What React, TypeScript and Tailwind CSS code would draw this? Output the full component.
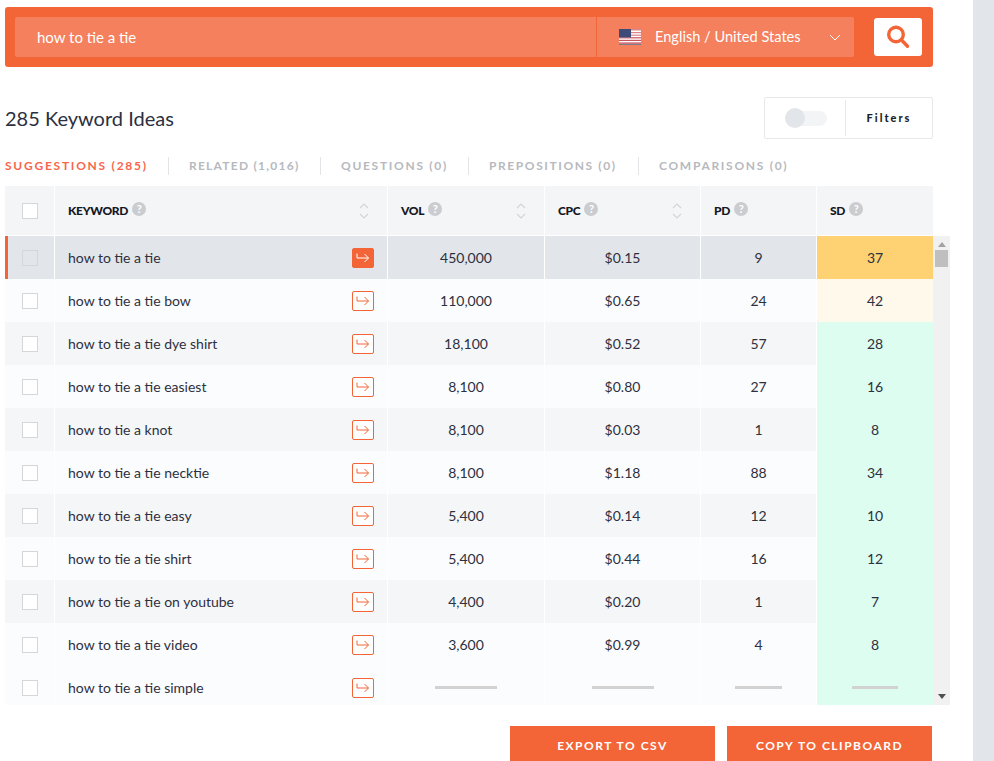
const font = { fontFamily: '"Lato", "Liberation Sans", sans-serif' };

type Row = { kw: string; vol?: string; cpc?: string; pd?: string; sd?: string; sdBg: string };

const rows: Row[] = [
  { kw: "how to tie a tie", vol: "450,000", cpc: "$0.15", pd: "9", sd: "37", sdBg: "bg-[#fed172]" },
  { kw: "how to tie a tie bow", vol: "110,000", cpc: "$0.65", pd: "24", sd: "42", sdBg: "bg-[#fff9eb]" },
  { kw: "how to tie a tie dye shirt", vol: "18,100", cpc: "$0.52", pd: "57", sd: "28", sdBg: "bg-[#dcfdf0]" },
  { kw: "how to tie a tie easiest", vol: "8,100", cpc: "$0.80", pd: "27", sd: "16", sdBg: "bg-[#dcfdf0]" },
  { kw: "how to tie a knot", vol: "8,100", cpc: "$0.03", pd: "1", sd: "8", sdBg: "bg-[#dcfdf0]" },
  { kw: "how to tie a tie necktie", vol: "8,100", cpc: "$1.18", pd: "88", sd: "34", sdBg: "bg-[#dcfdf0]" },
  { kw: "how to tie a tie easy", vol: "5,400", cpc: "$0.14", pd: "12", sd: "10", sdBg: "bg-[#dcfdf0]" },
  { kw: "how to tie a tie shirt", vol: "5,400", cpc: "$0.44", pd: "16", sd: "12", sdBg: "bg-[#dcfdf0]" },
  { kw: "how to tie a tie on youtube", vol: "4,400", cpc: "$0.20", pd: "1", sd: "7", sdBg: "bg-[#dcfdf0]" },
  { kw: "how to tie a tie video", vol: "3,600", cpc: "$0.99", pd: "4", sd: "8", sdBg: "bg-[#dcfdf0]" },
  { kw: "how to tie a tie simple", sdBg: "bg-[#dcfdf0]" },
];

const tabs = [
  { label: "RELATED (1,016)", cls: "w-[152px] tracking-[1.25px]" },
  { label: "QUESTIONS (0)", cls: "w-[148px] tracking-[1.7px]" },
  { label: "PREPOSITIONS (0)", cls: "w-[170px] tracking-[1.6px]" },
  { label: "COMPARISONS (0)", cls: "w-[170px] tracking-[1.7px]" },
];

const gridCols = "grid grid-cols-[49px_332px_156px_155px_115px_116px] gap-x-px";

function Help() {
  return (
    <span className="ml-[4px] flex h-[14px] w-[14px] -translate-y-[2px] items-center justify-center rounded-full bg-[#cbccd0] text-[11px] font-bold leading-none text-white">
      ?
    </span>
  );
}

function Sort() {
  return (
    <svg width="12" height="18" viewBox="0 0 12 18" fill="none" stroke="#d3d5d9" strokeWidth="1.2">
      <path d="M2 6l4-4 4 4" />
      <path d="M2 12l4 4 4-4" />
    </svg>
  );
}

function Flag() {
  return (
    <svg width="22" height="16" viewBox="0 0 22 16">
      <rect width="22" height="16" fill="#fff" />
      <rect y="0" width="22" height="1.5" fill="#d9868c" />
      <rect y="3" width="22" height="1.2" fill="#d9868c" />
      <rect y="5.6" width="22" height="1.2" fill="#d9868c" />
      <rect y="8.2" width="22" height="1.2" fill="#c9535c" />
      <rect y="10.8" width="22" height="1.2" fill="#c9535c" />
      <rect y="13.4" width="22" height="1.4" fill="#c9535c" />
      <rect y="15" width="22" height="1" fill="#7d7f88" />
      <rect width="12" height="8.4" fill="#3e4a78" />
    </svg>
  );
}

function GoIcon({ active }: { active: boolean }) {
  return (
    <span
      className={`flex h-[20px] w-[22px] items-center justify-center rounded-[2px] border border-[#f36437] ${
        active ? "bg-[#f36437]" : "bg-white"
      }`}
    >
      <svg width="14" height="12" viewBox="0 0 14 12" fill="none" stroke={active ? "#fff" : "#f36437"} strokeWidth="1">
        <path d="M1 1.5v4.5h11.5" />
        <path d="M8.5 2l4 4-4 4" />
      </svg>
    </span>
  );
}

function Checkbox({ muted }: { muted?: boolean }) {
  return <span className={`block h-[16px] w-[16px] border ${muted ? "border-[#d5d6d9]" : "border-[#d5d6d9] bg-white"}`} />;
}

function Dash({ w }: { w: string }) {
  return <span className={`block h-[3px] bg-[#d2d2d2] ${w}`} />;
}

function rowBg(i: number) {
  if (i === 0) return "bg-[#e2e5ea]";
  if (i === 10) return "bg-[#fbfcfe]";
  return i % 2 === 1 ? "bg-[#fbfcfe]" : "bg-[#f5f6f8]";
}

export default function App() {
  return (
    <div style={font} className="flex h-[761px] w-[994px] overflow-hidden bg-white text-[#2d3040]">
      <main className="w-[973px] shrink-0 pl-[5px] pt-[7px]">
        <div className="flex h-[60px] w-[928px] items-center rounded-[3px] bg-[#f36437] pl-[10px] pr-[11px]">
          <div className="flex h-[40px] w-[581px] items-center rounded-l-[2px] bg-[#f4805d] pl-[22px] text-[15px] text-white">
            how to tie a tie
          </div>
          <div className="ml-px flex h-[40px] w-[257px] items-center rounded-r-[2px] bg-[#f4805d] pl-[22px] pr-[13px] text-[14.6px] text-white">
            <Flag />
            <span className="ml-[14px] flex-1">English / United States</span>
            <svg width="12" height="7" viewBox="0 0 12 7" fill="none" stroke="#fff" strokeWidth="1">
              <path d="M1 1l5 5 5-5" />
            </svg>
          </div>
          <button className="ml-[20px] flex h-[38px] w-[48px] items-center justify-center rounded-[3px] bg-white">
            <svg width="26" height="26" viewBox="0 0 26 26" fill="none" stroke="#f36437" strokeWidth="3.4">
              <circle cx="11" cy="10.5" r="7.3" />
              <path d="M16.5 16l6 6.2" strokeLinecap="round" />
            </svg>
          </button>
        </div>

        <div className="mt-[30px] flex w-[928px] items-center justify-between">
          <h1 className="text-[20px] font-normal">285 Keyword Ideas</h1>
          <div className="flex h-[42px] w-[169px] items-center rounded-[2px] border border-[#e6e8ec]">
            <div className="flex h-[36px] w-[81px] items-center border-r border-[#e6e8ec] pl-[20px]">
              <span className="relative block h-[15px] w-[42px] rounded-full bg-[#f3f4f6]">
                <span className="absolute -top-[2.5px] left-0 block h-[20px] w-[20px] rounded-full bg-[#e2e5ea]" />
              </span>
            </div>
            <span className="flex-1 text-center text-[11px] font-black tracking-[2px] text-[#1c1e28]">Filters</span>
          </div>
        </div>

        <div className="mt-[17px] flex h-[20px] items-center text-[12px] font-bold text-[#b7b9be]">
          <span className="w-[163px] tracking-[1.75px] text-[#f8654b]">SUGGESTIONS (285)</span>
          {tabs.map((t) => (
            <span key={t.label} className={`border-l border-[#e2e4e8] pl-[20px] ${t.cls}`}>
              {t.label}
            </span>
          ))}
        </div>

        <div className={`${gridCols} mt-[10px] h-[49px] w-[928px] text-[12px] font-black tracking-[-0.3px] text-[#15171f]`}>
          <div className="flex items-center justify-center bg-[#f4f5f7]">
            <Checkbox />
          </div>
          {[
            { label: "KEYWORD", sort: true },
            { label: "VOL", sort: true },
            { label: "CPC", sort: true },
            { label: "PD", sort: false },
            { label: "SD", sort: false },
          ].map((h) => (
            <div key={h.label} className="flex items-center bg-[#f4f5f7] pl-[13px] pr-[17px]">
              <span>{h.label}</span>
              <Help />
              {h.sort && (
                <span className="ml-auto">
                  <Sort />
                </span>
              )}
            </div>
          ))}
        </div>

        <div className="mt-px flex h-[469px] w-[945px] overflow-hidden">
          <div className="w-[928px] shrink-0 text-[14px]">
            {rows.map((r, i) => {
              const active = i === 0;
              const bg = rowBg(i);
              return (
                <div key={r.kw} className={`${gridCols} h-[43px]`}>
                  <div className={`flex items-center justify-center ${bg} ${active ? "border-l-[3px] border-[#f36437] pr-[3px]" : ""}`}>
                    <Checkbox muted={active} />
                  </div>
                  <div className={`flex items-center justify-between pl-[13px] pr-[13px] ${bg}`}>
                    <span>{r.kw}</span>
                    <GoIcon active={active} />
                  </div>
                  <div className={`flex items-center justify-center ${bg}`}>{r.vol ?? <Dash w="w-[62px]" />}</div>
                  <div className={`flex items-center justify-center ${bg}`}>{r.cpc ?? <Dash w="w-[62px]" />}</div>
                  <div className={`flex items-center justify-center ${bg}`}>{r.pd ?? <Dash w="w-[47px]" />}</div>
                  <div className={`flex items-center justify-center ${r.sdBg}`}>{r.sd ?? <Dash w="w-[46px]" />}</div>
                </div>
              );
            })}
          </div>
          <div className="flex w-[17px] shrink-0 flex-col items-center bg-[#f1f1f1]">
            <span className="mt-[6px] block h-0 w-0 border-x-[4px] border-b-[5px] border-x-transparent border-b-[#a3a3a3]" />
            <span className="mt-[3px] block h-[17px] w-[13px] bg-[#bfbfbf]" />
            <span className="mb-[6px] mt-auto block h-0 w-0 border-x-[4px] border-t-[5px] border-x-transparent border-t-[#505050]" />
          </div>
        </div>

        <div className="mt-[21px] flex w-[927px] justify-end gap-[12px]">
          <button className="h-[40px] w-[205px] bg-[#f36437] text-[12px] font-bold tracking-[1.5px] text-white">EXPORT TO CSV</button>
          <button className="h-[40px] w-[205px] bg-[#f36437] text-[12px] font-bold tracking-[1.5px] text-white">COPY TO CLIPBOARD</button>
        </div>
      </main>
      <aside className="flex-1 bg-[#e2e5ea]" />
    </div>
  );
}
